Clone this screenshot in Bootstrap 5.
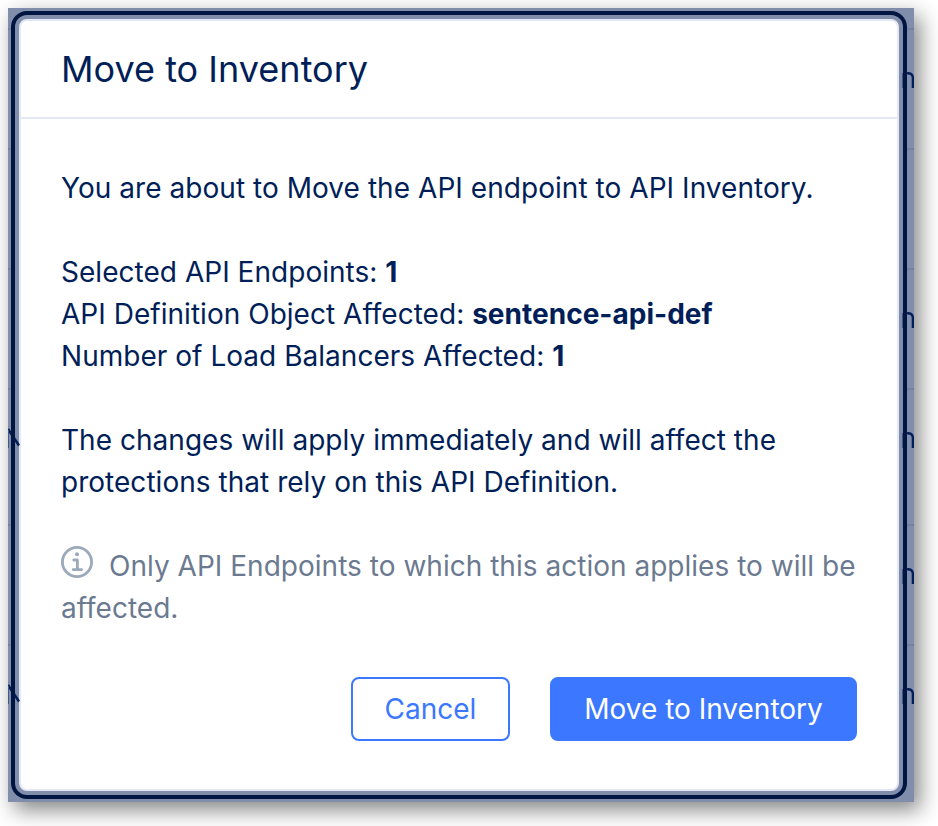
<!DOCTYPE html>
<html lang="en">
<head>
<meta charset="utf-8">
<meta name="viewport" content="width=device-width, initial-scale=1">
<title>Move to Inventory</title>
<link href="https://cdn.jsdelivr.net/npm/bootstrap@5.3.0/dist/css/bootstrap.min.css" rel="stylesheet">
<style>
body{font-family:Inter,sans-serif;color:#001e57;background:#fff;font-size:28px;line-height:42px;height:826px;padding:8px;overflow:hidden}
.backdrop-area{width:906px;height:794px;background:#808dab;box-shadow:6px 8px 20px rgba(0,0,0,.48);padding:11px}
.behind{left:0;top:0}
.dialog-box{width:880px;height:772px;border:2px solid #e4e8f4;border-radius:8px;background:#fff;box-shadow:0 0 0 4px #808dab,0 0 0 8px #001640}
.dialog-box .modal-header{height:98px;padding:0 40px;border-bottom:2px solid #e4e8f4;border-radius:0}
.dialog-box .modal-title{font-size:36px;font-weight:400;line-height:54px;letter-spacing:.02px}
.dialog-box .modal-body{padding:48px 40px 0}
.dialog-box p{margin:0 0 42px;letter-spacing:.03px;white-space:nowrap}
.dialog-box p.lead-line{letter-spacing:.05px}
.dialog-box p b{letter-spacing:.02px;font-weight:700}
.dialog-box p.note{color:#6b7a90;margin-bottom:0;letter-spacing:.02px}
.note svg{display:inline-block;vertical-align:-2px;margin:-1px 16px 0 0}
.dialog-box .modal-footer{padding:0 40px 48px;gap:40px}
.dialog-box .btn{height:64px;font-size:28px;line-height:42px;padding:0;margin:0;border:2px solid #3b78ff;border-radius:8px}
.dialog-box .btn-cancel{width:159px;color:#3b78ff;background:#fff}
.dialog-box .btn-move{width:307px;color:#fff;background:#3b78ff}
</style>
<script src="https://cdn.jsdelivr.net/npm/bootstrap@5.3.0/dist/js/bootstrap.bundle.min.js"></script>
</head>
<body>
<div class="backdrop-area position-relative">
  <svg class="behind position-absolute" width="906" height="794" aria-hidden="true">
    <g fill="#7480a6"><rect y="20" width="906" height="2"/><rect y="140" width="906" height="2"/><rect y="260" width="906" height="2"/><rect y="380" width="906" height="2"/><rect y="516" width="906" height="2"/><rect y="636" width="906" height="2"/></g>
  </svg>
  <div class="dialog-box position-relative d-flex flex-column" role="dialog" aria-labelledby="title">
    <div class="modal-header"><h1 class="modal-title" id="title">Move to Inventory</h1></div>
    <div class="modal-body">
      <p class="lead-line">You are about to Move the API endpoint to API Inventory.</p>
      <p>Selected API Endpoints: <b>1</b><br>API Definition Object Affected: <b>sentence-api-def</b><br>Number of Load Balancers Affected: <b>1</b></p>
      <p>The changes will apply immediately and will affect the<br>protections that rely on this API Definition.</p>
      <p class="note"><svg width="32" height="32" viewBox="0 0 32 32" fill="none" stroke="#9ba9ba" stroke-width="2.8"><circle cx="16" cy="16" r="14.6"/><circle cx="16" cy="8.2" r="2" fill="#9ba9ba" stroke="none"/><path d="M12.8 14H16.4V23.6M12.2 23.6H20.6" stroke-linecap="round" stroke-linejoin="round"/></svg>Only API Endpoints to which this action applies to will be<br>affected.</p>
    </div>
    <div class="modal-footer border-0 d-flex justify-content-end flex-nowrap">
      <button type="button" class="btn btn-cancel">Cancel</button>
      <button type="button" class="btn btn-move">Move to Inventory</button>
    </div>
  </div>
  <svg class="behind position-absolute" width="906" height="794" aria-hidden="true">
    <g fill="none" stroke="#001e57" stroke-width="2.4">
      <path id="n" d="M899 65.400C902 64.900 904.900 66.200 904.900 70V80"/>
      <use href="#n" y="240"/><use href="#n" y="360"/><use href="#n" y="496"/><use href="#n" y="616"/>
      <path id="d" d="M0 421L11 437.500"/><use href="#d" y="256"/>
    </g>
    <g fill="#425887"><path id="s" d="M894 65h1.500v15h-1.500z"/><use href="#s" y="240"/><use href="#s" y="360"/><use href="#s" y="496"/><use href="#s" y="616"/><path d="M0 422h1v18h-1zM0 678h1v18h-1z"/></g>
    <path d="M5 410v40M5 666v40M897 60v30M897 300v30M897 420v30M897 556v30M897 676v30" stroke="#001640" stroke-width="4"/>
  </svg>
</div>
</body>
</html>
